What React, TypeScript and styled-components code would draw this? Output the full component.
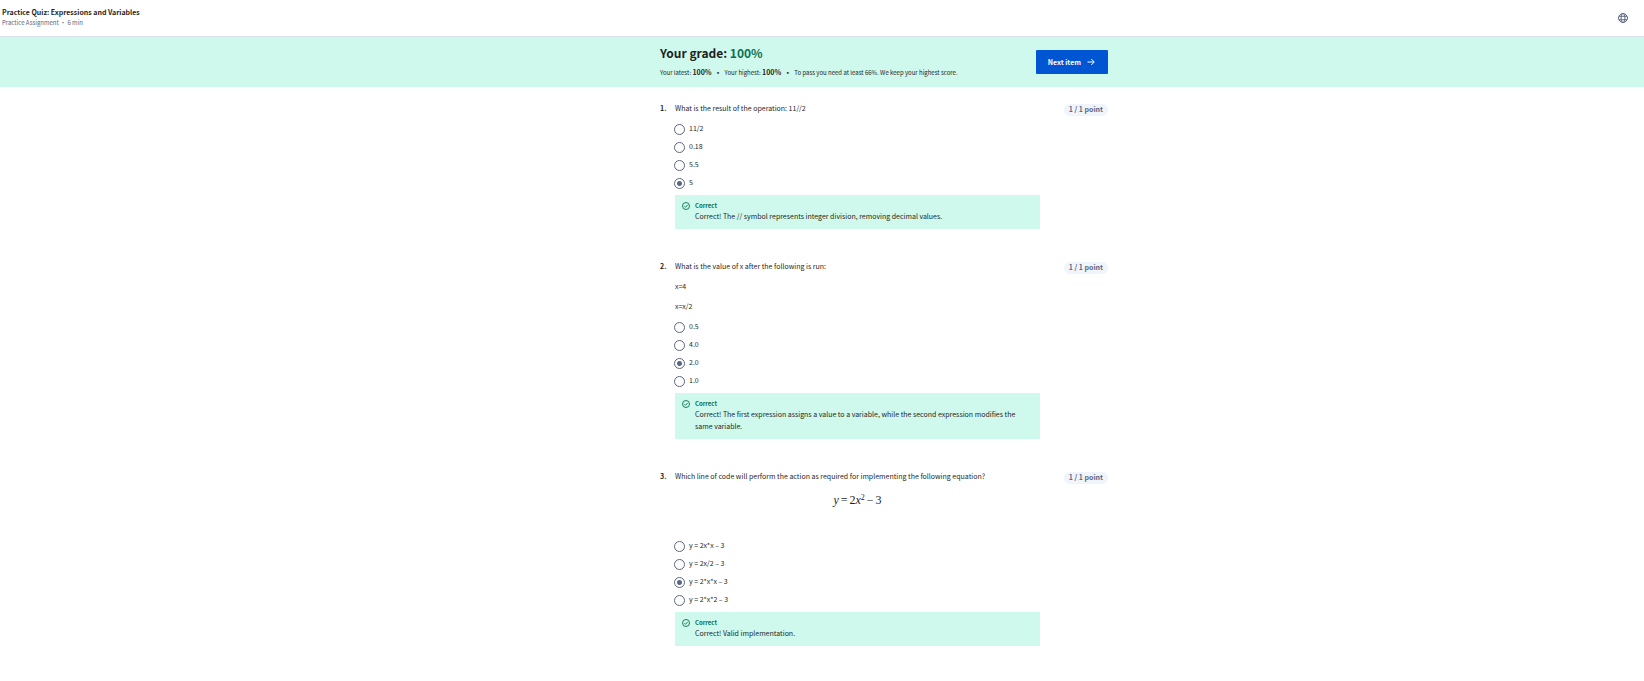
import React from "react";
import styled, { createGlobalStyle } from "styled-components";

const GlobalStyle = createGlobalStyle`
  * { box-sizing: border-box; }
  body {
    margin: 0;
    background: #fff;
    color: #1f1f1f;
    font-family: "Noto Sans CJK SC", "Noto Sans", sans-serif;
    font-size: 7px;
    line-height: 12px;
  }
  h1, h2, p, fieldset { margin: 0; }
`;

const Header = styled.header`
  display: flex;
  align-items: center;
  justify-content: space-between;
  height: 37px;
  padding: 0 16px 1px 2px;
  border-bottom: 1px solid #dae1ed;
`;

const HeaderTitle = styled.h1`
  font-size: 7px;
  font-weight: 700;
  line-height: 10px;
`;

const HeaderMeta = styled.p`
  color: #5b6780;
  font-size: 6px;
  line-height: 12px;
`;

const LanguageButton = styled.button`
  display: flex;
  padding: 0;
  border: 0;
  background: none;
  color: #5b6780;
`;

const Banner = styled.section`
  background: #cff9ec;
`;

const Container = styled.div`
  max-width: 572px;
  margin: 0 auto;
  padding-left: 124px;
`;

const BannerRow = styled(Container)`
  display: flex;
  align-items: center;
  justify-content: space-between;
  height: 50px;
`;

const Grade = styled.h2`
  font-size: 12px;
  font-weight: 700;
  line-height: 16px;

  span { color: #087051; }
`;

const Stats = styled.div`
  display: flex;
  align-items: baseline;
  gap: 3px;
  margin-top: 5px;
  font-size: 6px;
  line-height: 12px;

  strong { font-size: 7px; font-weight: 700; }
`;

const NextButton = styled.button`
  display: flex;
  align-items: center;
  gap: 5px;
  height: 24px;
  padding: 0 13px 0 12px;
  border: 0;
  border-radius: 1px;
  background: #0056d2;
  color: #fff;
  font: 700 7px/12px "Noto Sans CJK SC", "Noto Sans", sans-serif;

  svg { margin-left: 1px; }
`;

const Questions = styled.main`
  padding-top: 16px;
`;

const Question = styled.article`
  display: grid;
  grid-template-columns: 15px 1fr 68px;
  margin-bottom: 32px;
`;

const QuestionNumber = styled.span`
  line-height: 10px;
  font-weight: 700;
`;

const Body = styled.fieldset`
  min-width: 0;
  padding: 0;
  border: 0;
`;

const Prompt = styled.div`
  display: grid;
  gap: 10px;
  margin-bottom: 10px;
  line-height: 10px;
`;

const Options = styled.div`
  display: grid;
  gap: 6px;
  margin: 0 0 6px -1px;
`;

const Option = styled.label`
  display: flex;
  align-items: center;
  gap: 4px;
  height: 12px;
`;

const OptionText = styled.span`
  padding-bottom: 2px;
  line-height: 10px;
`;

const Radio = styled.input`
  appearance: none;
  flex: none;
  width: 11px;
  height: 11px;
  margin: 0;
  border: 1px solid #5b6780;
  border-radius: 50%;

  &:checked {
    background: radial-gradient(circle, #5b6780 0 2px, #fff 3px);
  }
`;

const Feedback = styled.section`
  display: flex;
  gap: 5px;
  padding: 6px 7px 7px;
  background: #cff9ec;

  svg { flex: none; margin-top: 1px; }
`;

const FeedbackTitle = styled.h3`
  margin: 0;
  color: #087051;
  font-size: 6px;
  font-weight: 700;
  line-height: 9px;
`;

const Points = styled.span`
  justify-self: end;
  align-self: start;
  height: 12px;
  margin-top: 1px;
  padding: 0 5px;
  border-radius: 6px;
  background: #f0f4fb;
  color: #5b6780;
  font-weight: 700;
  line-height: 10px;
`;

const Equation = styled.div`
  display: flex;
  justify-content: center;
  gap: 2px;
  height: 39px;
  font: 12px/18px "Liberation Serif", serif;

  sup { font-size: 8px; line-height: 1; vertical-align: 4px; }
`;

const GlobeIcon = () => (
  <svg width="10" height="10" viewBox="0 0 20 20" fill="none" stroke="currentColor" strokeWidth="2" aria-hidden="true">
    <circle cx="10" cy="10" r="9" />
    <ellipse cx="10" cy="10" rx="4" ry="9" />
    <path d="M2 6.5h16M2 13.5h16" />
  </svg>
);

const ArrowIcon = () => (
  <svg width="8" height="8" viewBox="0 0 16 16" fill="none" stroke="currentColor" strokeWidth="2" aria-hidden="true">
    <path d="M1 8h13M8.5 2l6 6-6 6" />
  </svg>
);

const CheckIcon = () => (
  <svg width="8" height="8" viewBox="0 0 16 16" fill="none" stroke="#087051" strokeWidth="1.8" aria-hidden="true">
    <circle cx="8" cy="8" r="7" />
    <path d="M4.8 8.4l2.2 2.2 4.4-4.8" />
  </svg>
);

type QuestionData = {
  prompt: React.ReactNode[];
  options: string[];
  selected: number;
  feedback: string;
};

const questions: QuestionData[] = [
  {
    prompt: ["What is the result of the operation: 11//2"],
    options: ["11/2", "0.18", "5.5", "5"],
    selected: 3,
    feedback: "Correct! The // symbol represents integer division, removing decimal values.",
  },
  {
    prompt: ["What is the value of x after the following is run:", "x=4", "x=x/2"],
    options: ["0.5", "4.0", "2.0", "1.0"],
    selected: 2,
    feedback:
      "Correct! The first expression assigns a value to a variable, while the second expression modifies the same variable.",
  },
  {
    prompt: [
      "Which line of code will perform the action as required for implementing the following equation?",
      <Equation>
        <i>y</i>
        <span>=</span>
        <span>2<i>x</i><sup>2</sup></span>
        <span>−</span>
        <span>3</span>
      </Equation>,
    ],
    options: ["y = 2x*x – 3", "y = 2x/2 – 3", "y = 2*x*x – 3", "y = 2*x*2 – 3"],
    selected: 2,
    feedback: "Correct! Valid implementation.",
  },
];

export default function App() {
  return (
    <>
      <GlobalStyle />
      <Header>
        <div>
          <HeaderTitle>Practice Quiz: Expressions and Variables</HeaderTitle>
          <HeaderMeta>Practice Assignment • 6 min</HeaderMeta>
        </div>
        <LanguageButton aria-label="Language"><GlobeIcon /></LanguageButton>
      </Header>
      <Banner>
        <BannerRow>
          <div>
            <Grade>Your grade: <span>100%</span></Grade>
            <Stats>
              <span>Your latest: <strong>100%</strong></span>
              <strong>•</strong>
              <span>Your highest: <strong>100%</strong></span>
              <strong>•</strong>
              <span>To pass you need at least 66%. We keep your highest score.</span>
            </Stats>
          </div>
          <NextButton>Next item <ArrowIcon /></NextButton>
        </BannerRow>
      </Banner>
      <Questions>
        <Container>
          {questions.map((q, n) => (
            <Question key={n}>
              <QuestionNumber>{n + 1}.</QuestionNumber>
              <Body>
                <Prompt>
                  {q.prompt.map((part, i) => <div key={i}>{part}</div>)}
                </Prompt>
                <Options>
                  {q.options.map((option, i) => (
                    <Option key={option}>
                      <Radio type="radio" name={`question-${n}`} defaultChecked={i === q.selected} />
                      <OptionText>{option}</OptionText>
                    </Option>
                  ))}
                </Options>
                <Feedback>
                  <CheckIcon />
                  <div>
                    <FeedbackTitle>Correct</FeedbackTitle>
                    <p>{q.feedback}</p>
                  </div>
                </Feedback>
              </Body>
              <Points>1 / 1 point</Points>
            </Question>
          ))}
        </Container>
      </Questions>
    </>
  );
}
